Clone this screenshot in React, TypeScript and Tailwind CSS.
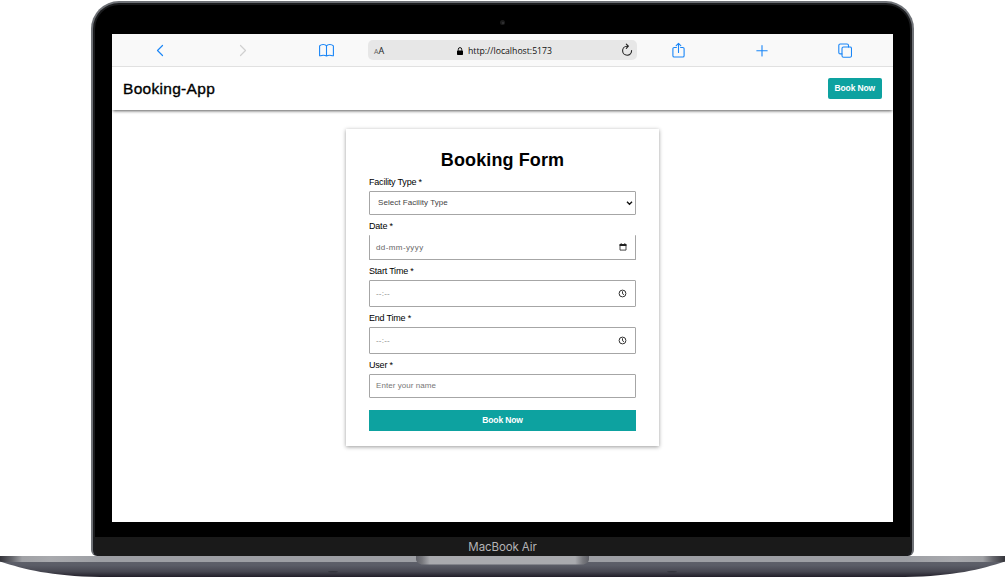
import type { ReactNode } from "react";

function Glyph({ w, h, children, color = "#1a86f7" }: { w: number; h: number; children: ReactNode; color?: string }) {
  return (
    <svg width={w} height={h} viewBox={`0 0 ${w} ${h}`} fill="none" stroke={color} strokeWidth="1.1" strokeLinecap="round" strokeLinejoin="round">
      {children}
    </svg>
  );
}

function BrowserBar() {
  return (
    <div className="grid h-[33px] shrink-0 grid-cols-[83px_83px_83px_269px_83px_83px_83px] items-center justify-items-center border-b border-[#e2e2e2] bg-[#f9f9f9] pl-[7px]">
      <Glyph w={10} h={14}><path d="M6.500 2.500 1.500 7.500l5 5" strokeWidth="1.2" /></Glyph>
      <Glyph w={10} h={14} color="#d0d0d0"><path d="M1.500 2.500 6.500 7.500l-5 5" strokeWidth="1.2" /></Glyph>
      <Glyph w={15} h={14}>
        <path d="M7.500 2.900C6.900 1.900 5.600 1.500 4.200 1.500S1.500 1.900.6 2.900v9.800h1c.8-.4 1.600-.5 2.700-.5 1.300 0 2.400.2 3.200.8.800-.6 1.900-.8 3.200-.8 1.100 0 1.900.1 2.700.5h1V2.900c-.9-1-2.200-1.400-3.600-1.400S8.100 1.900 7.500 2.900Zm0 0v9.800" />
      </Glyph>
      <div className="flex h-5 w-full items-center justify-between rounded-[5px] bg-[#e7e7e7] pr-[4px] pl-[6px] font-['Open_Sans','Noto_Sans',sans-serif] text-[#111]">
        <span className="flex w-[12px] items-baseline pt-px leading-none">
          <span className="text-[7px] text-[#666]">A</span>
          <span className="text-[9px] text-[#222]">A</span>
        </span>
        <span className="flex items-center gap-[5px] pt-[2px] pl-[2px]">
          <svg width="6" height="8" viewBox="0 0 6 8">
            <rect y="3.400" width="6" height="4.600" rx=".7" fill="#000" />
            <path d="M1.300 3.700V2.300a1.700 1.700 0 0 1 3.400 0v1.400" fill="none" stroke="#000" strokeWidth=".9" />
          </svg>
          <span className="text-[8.700px] leading-none">http://localhost:5173</span>
        </span>
        <Glyph w={12} h={14} color="#222">
          <path d="M7.300 3.200H6A4.500 4.500 0 1 0 10.600 7.600M5.300 1.100l2.100 2.100-2.100 2.100" />
        </Glyph>
      </div>
      <Glyph w={13} h={16}>
        <path d="M4.400 5.500H2.200A1.300 1.300 0 0 0 .9 6.800v6.900A1.300 1.300 0 0 0 2.200 15h8.600a1.300 1.300 0 0 0 1.300-1.300V6.800a1.300 1.300 0 0 0-1.300-1.300H8.600M6.500 10.500V1.300M4.200 3.600l2.300-2.300 2.300 2.300" />
      </Glyph>
      <Glyph w={12} h={13}><path d="M6 1.500v10.400M.8 6.700h10.400" /></Glyph>
      <Glyph w={14} h={15}>
        <rect x="4" y="4" width="9.500" height="10.200" rx="1.500" />
        <path d="M3.900 10.900H2.300A1.500 1.500 0 0 1 .8 9.400V2.500A1.500 1.500 0 0 1 2.300 1h6.700a1.500 1.500 0 0 1 1.500 1.500v1.400" />
      </Glyph>
    </div>
  );
}

const Clock = () => (
  <svg width="9" height="9" viewBox="0 0 9 9" fill="none" stroke="#333" strokeWidth="1">
    <circle cx="4.500" cy="4.500" r="3.400" />
    <path d="M4.500 2.300v2.400l1.500 1" />
  </svg>
);

const Calendar = () => (
  <svg width="8" height="8" viewBox="0 0 8 8">
    <path d="M1 1.500h6v5.600H1z" fill="none" stroke="#333" strokeWidth=".9" />
    <path d="M.6 1h6.800v2H.6zM1.700.2h1v1h-1zM5.300.2h1v1h-1z" fill="#222" />
  </svg>
);

const Chevron = () => (
  <svg width="7" height="5" viewBox="0 0 7 5" fill="none" stroke="#111" strokeWidth="1.400">
    <path d="m1 .8 2.500 2.500L6 .8" />
  </svg>
);

function Field({ label, className, children }: { label: string; className: string; children: ReactNode }) {
  return (
    <div>
      <div className="h-5 text-[9px] leading-[23px] tracking-[-0.2px] text-black">{label}</div>
      <div className={`flex items-center justify-between rounded-[1px] border border-[#a6a6a6] text-[8px] ${className}`}>{children}</div>
    </div>
  );
}

function BookingForm() {
  return (
    <div className="mx-auto mt-[19px] h-[317px] w-[313px] bg-white px-[23px] pt-[19px] shadow-[0_1px_4px_rgba(0,0,0,0.4)]">
      <h1 className="h-[23px] text-center text-[18px] leading-[24px] font-bold tracking-[0.12px]">Booking Form</h1>
      <Field label="Facility Type *" className="h-6 pr-[2px] pl-[8px] text-[#444]">
        <span className="tracking-[0.05px]">Select Facility Type</span><Chevron />
      </Field>
      <Field label="Date *" className="h-[25px] border-t-0 pr-[8px] pl-[6px] text-[#666]">
        <span className="pt-px tracking-[0.4px]">dd-mm-yyyy</span><Calendar />
      </Field>
      <Field label="Start Time *" className="h-[27px] pr-[8px] pl-[6px] text-[#888]">
        <span className="tracking-[0.2px]">--:--</span><Clock />
      </Field>
      <Field label="End Time *" className="h-[27px] pr-[8px] pl-[6px] text-[#888]">
        <span className="tracking-[0.2px]">--:--</span><Clock />
      </Field>
      <Field label="User *" className="h-6 pl-[6px] text-[#777]">
        <span className="tracking-[0.05px]">Enter your name</span>
      </Field>
      <button className="mt-3 block h-[21px] w-full bg-[#0da2a0] text-[8.500px] font-bold tracking-[-0.15px] text-white">Book Now</button>
    </div>
  );
}

function LaptopBase() {
  return (
    <svg className="block" width="1005" height="21" viewBox="0 0 1005 21">
      <defs>
        <linearGradient id="body" x1="0" y1="0" x2="0" y2="1">
          <stop offset="0" stopColor="#646770" />
          <stop offset=".45" stopColor="#5a5c66" />
          <stop offset=".75" stopColor="#464650" />
          <stop offset="1" stopColor="#211e29" />
        </linearGradient>
        <linearGradient id="edge" x1="0" y1="0" x2="1" y2="0">
          <stop offset="0" stopColor="#34343a" />
          <stop offset=".012" stopColor="#66676d" />
          <stop offset=".022" stopColor="#a0a1a5" />
          <stop offset=".05" stopColor="#a8a9ad" />
          <stop offset=".1" stopColor="#9d9fa4" />
          <stop offset=".9" stopColor="#9d9fa4" />
          <stop offset=".95" stopColor="#a8a9ad" />
          <stop offset=".978" stopColor="#a0a1a5" />
          <stop offset=".988" stopColor="#66676d" />
          <stop offset="1" stopColor="#34343a" />
        </linearGradient>
        <linearGradient id="notch" x1="0" y1="0" x2="1" y2="0">
          <stop offset="0" stopColor="#606168" />
          <stop offset=".035" stopColor="#77787d" />
          <stop offset=".08" stopColor="#a9aaae" />
          <stop offset=".92" stopColor="#a9aaae" />
          <stop offset=".965" stopColor="#77787d" />
          <stop offset="1" stopColor="#606168" />
        </linearGradient>
        <clipPath id="hull"><path d="M0 0h1005v5.500C980 13.500 955 20 905 21H100C50 20 25 13.500 0 5.500Z" /></clipPath>
      </defs>
      <g clipPath="url(#hull)">
        <rect width="1005" height="21" fill="url(#body)" />
        <rect width="1005" height="6" fill="url(#edge)" />
      </g>
      <path d="M416 0h173v3c0 3-3 5.500-7 5.500H423c-4 0-7-2.500-7-5.500Z" fill="url(#notch)" />
      <ellipse cx="333" cy="15.700" rx="5" ry=".7" fill="#34343c" />
      <ellipse cx="672" cy="15.700" rx="5" ry=".7" fill="#34343c" />
    </svg>
  );
}

export default function App() {
  return (
    <div className="h-[577px] w-[1005px] overflow-hidden bg-white pt-px font-['Liberation_Sans',Arial,sans-serif] text-black">
      <div className="mx-auto flex h-[555px] w-[823px] flex-col rounded-t-[28px] rounded-b-[6px] border-2 border-b-0 border-[#6f7277] bg-[#1b1c1e] px-[2px] pt-[2px]">
        <div className="flex h-[532px] flex-col items-center rounded-t-[24px] bg-black">
          <div className="flex h-[29px] shrink-0 items-center pt-[6px]">
            <div className="flex size-[5px] items-center justify-center rounded-full bg-[#1c1c1c]">
              <div className="size-[2px] rounded-full bg-[#343437]" />
            </div>
          </div>
          <div className="flex h-[488px] w-[781px] flex-col overflow-hidden bg-white">
            <BrowserBar />
            <header className="flex h-[43px] shrink-0 items-center justify-between pr-[11px] pl-[11px] shadow-[0_2px_3px_-1px_rgba(0,0,0,0.65)]">
              <span className="text-[15.500px] font-medium tracking-[0.3px] [-webkit-text-stroke:0.350px_black]">Booking-App</span>
              <button className="h-[21px] w-[54.500px] rounded-[2px] bg-[#0da2a0] text-[8.500px] font-bold tracking-[-0.15px] text-white">Book Now</button>
            </header>
            <BookingForm />
          </div>
        </div>
        <div className="flex h-[19px] items-center justify-center rounded-b-[8px] bg-[#1a1a1a] pt-[2px] font-[Inter,sans-serif] text-[11.500px] tracking-[-0.1px] text-[#b4b4b6]">MacBook Air</div>
      </div>
      <LaptopBase />
    </div>
  );
}
